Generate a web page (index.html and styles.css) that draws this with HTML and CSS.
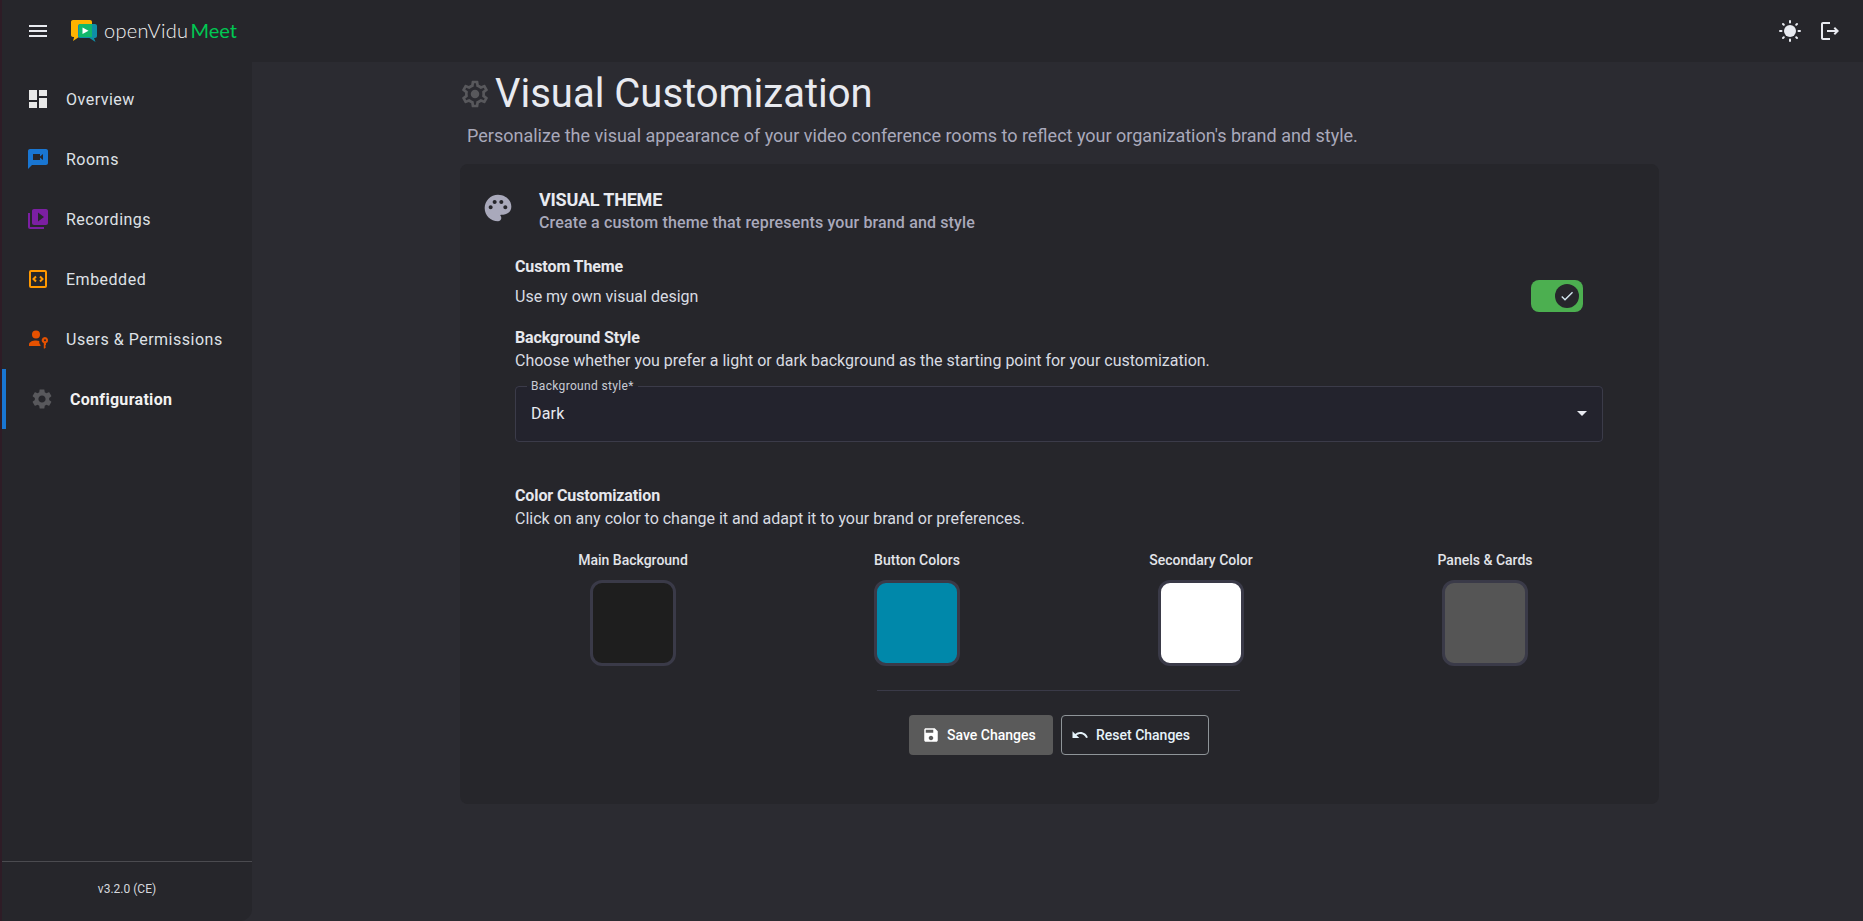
FILE: index.html
```html
<!DOCTYPE html>
<html lang="en">
<head>
    <meta charset="UTF-8">
    <title>Visual Customization</title>
    <link rel="stylesheet" href="styles.css">
</head>
<body>
    <div class="app">
        <header class="topbar">
            <button class="icon-btn menu-btn" type="button">
                <svg viewBox="0 0 24 24" width="24" height="24"><path fill="#e8eaf0" d="M3 18h18v-2H3v2zm0-5h18v-2H3v2zm0-7v2h18V6H3z"/></svg>
            </button>
            <div class="logo">
                <svg viewBox="0 0 26 23" width="26" height="23">
                    <path fill="#ffb300" d="M2 0h17c1.100 0 2 .9 2 2v13c0 1.100-.9 2-2 2H8l-6 4 1.200-4H2c-1.100 0-2-.9-2-2V2C0 .9.900 0 2 0z"/>
                    <path fill="#0f8fa8" d="M9 4h15c1.100 0 2 .9 2 2v10c0 1.100-.9 2-2 2h-1l1.500 4-6-4H9c-1.100 0-2-.9-2-2V6c0-1.100.9-2 2-2z"/>
                    <path fill="#12b76a" d="M8 4h13v13H9c-.6 0-1-.4-1-1z"/>
                    <path fill="#fff" d="M11.500 7.500l6 3.200-6 3.200z"/>
                </svg>
                <span class="logo-text">openVidu</span><span class="logo-meet">Meet</span>
            </div>
            <div class="topbar-actions">
                <button class="icon-btn" type="button">
                    <svg viewBox="0 0 24 24" width="24" height="24"><circle cx="12" cy="12" r="6" fill="#e8eaf0"/><path stroke="#e8eaf0" stroke-width="2" stroke-linecap="round" d="M12 2v1.500M12 20.500V22M2 12h1.500M20.500 12H22M5 5l.8.8M18.200 18.200l.8.8M5 19l.8-.8M18.200 5.800l.8-.8"/></svg>
                </button>
                <button class="icon-btn" type="button">
                    <svg viewBox="0 0 24 24" width="24" height="24"><path fill="#e8eaf0" d="M17 8l-1.410 1.410L17.170 11H9v2h8.170l-1.580 1.580L17 16l4-4zM5 5h7V3H5c-1.100 0-2 .9-2 2v14c0 1.100.9 2 2 2h7v-2H5V5z"/></svg>
                </button>
            </div>
        </header>

        <div class="layout">
            <aside class="sidebar">
                <nav class="nav">
                    <a class="nav-item">
                        <svg viewBox="0 0 24 24" width="24" height="24"><path fill="#e8e8e8" d="M3 13h8V3H3v10zm0 8h8v-6H3v6zm10 0h8V11h-8v10zm0-18v6h8V3h-8z"/></svg>
                        <span>Overview</span>
                    </a>
                    <a class="nav-item">
                        <svg viewBox="0 0 24 24" width="24" height="24"><path fill="#1976d2" d="M20 2H4c-1.100 0-2 .9-2 2v18l4-4h14c1.100 0 2-.9 2-2V4c0-1.100-.9-2-2-2zm-3 11l-3-2.400V13H7V7h7v2.400L17 7v6z"/></svg>
                        <span>Rooms</span>
                    </a>
                    <a class="nav-item">
                        <svg viewBox="0 0 24 24" width="24" height="24"><path fill="#7b1fa2" d="M4 6H2v14c0 1.100.9 2 2 2h14v-2H4V6zm16-4H8c-1.100 0-2 .9-2 2v12c0 1.100.9 2 2 2h12c1.100 0 2-.9 2-2V4c0-1.100-.9-2-2-2zm-8 12.500v-9l6 4.500-6 4.500z"/></svg>
                        <span>Recordings</span>
                    </a>
                    <a class="nav-item">
                        <svg viewBox="0 0 24 24" width="24" height="24"><rect x="4" y="4" width="16" height="16" rx="1" fill="none" stroke="#ff9800" stroke-width="2"/><path fill="none" stroke="#ff9800" stroke-width="2" d="M10 9.500L7.500 12l2.500 2.500M14 9.500l2.500 2.500-2.500 2.500"/></svg>
                        <span>Embedded</span>
                    </a>
                    <a class="nav-item">
                        <svg viewBox="0 0 24 24" width="24" height="24"><circle cx="10" cy="7.500" r="4" fill="#e65100"/><path fill="#e65100" d="M3 19v-1.500c0-2.500 3.500-4 7-4 1.200 0 2.300.2 3.300.5-.3 1.500.2 3 1.200 4v1z"/><path fill="#e65100" fill-rule="evenodd" d="M19 10a3.200 3.200 0 0 1 1 6.200V18l-1 1 1 1-1.200 1.500h-1L17.800 16.200A3.200 3.200 0 0 1 19 10zm0 2.200a1 1 0 1 0 0 2 1 1 0 0 0 0-2z"/></svg>
                        <span>Users &amp; Permissions</span>
                    </a>
                    <a class="nav-item active">
                        <svg viewBox="0 0 24 24" width="24" height="24"><path fill="#58585c" d="M19.140 12.940c.04-.3.06-.61.06-.94 0-.32-.02-.64-.07-.94l2.030-1.580c.18-.14.23-.41.12-.61l-1.920-3.320c-.12-.22-.37-.29-.59-.22l-2.390.96c-.5-.38-1.030-.7-1.620-.94l-.36-2.540c-.04-.24-.24-.41-.48-.41h-3.840c-.24 0-.43.17-.47.41l-.36 2.540c-.59.24-1.130.57-1.620.94l-2.390-.96c-.22-.08-.47 0-.59.22L2.740 8.870c-.12.21-.08.47.12.61l2.030 1.580c-.05.3-.09.63-.09.94s.02.64.07.94l-2.030 1.580c-.18.14-.23.41-.12.61l1.920 3.320c.12.22.37.29.59.22l2.390-.96c.5.38 1.030.7 1.620.94l.36 2.540c.05.24.24.41.48.41h3.840c.24 0 .44-.17.47-.41l.36-2.540c.59-.24 1.130-.56 1.620-.94l2.390.96c.22.08.47 0 .59-.22l1.920-3.320c.12-.22.07-.47-.12-.61l-2.010-1.580zM12 15.600c-1.980 0-3.600-1.620-3.600-3.600s1.620-3.600 3.600-3.600 3.600 1.620 3.600 3.600-1.620 3.600-3.600 3.600z"/></svg>
                        <span>Configuration</span>
                    </a>
                </nav>
                <div class="version">v3.2.0 (CE)</div>
            </aside>

            <main class="main">
                <div class="page-title">
                    <svg viewBox="0 0 24 24" width="32" height="32"><path fill="#58585c" d="M19.430 12.980c.04-.32.07-.64.07-.98 0-.34-.03-.66-.07-.98l2.110-1.650c.19-.15.24-.42.12-.64l-2-3.460c-.09-.16-.26-.25-.44-.25-.06 0-.12.01-.17.03l-2.490 1c-.52-.4-1.080-.73-1.690-.98l-.38-2.650C14.460 2.180 14.250 2 14 2h-4c-.25 0-.46.18-.49.42l-.38 2.650c-.61.25-1.170.59-1.690.98l-2.490-1c-.06-.02-.12-.03-.18-.03-.17 0-.34.09-.43.25l-2 3.460c-.13.22-.07.49.12.64l2.110 1.650c-.04.32-.07.65-.07.98 0 .33.03.66.07.98l-2.110 1.650c-.19.15-.24.42-.12.64l2 3.460c.09.16.26.25.44.25.06 0 .12-.01.17-.03l2.490-1c.52.4 1.080.73 1.690.98l.38 2.650c.03.24.24.42.49.42h4c.25 0 .46-.18.49-.42l.38-2.650c.61-.25 1.170-.59 1.690-.98l2.490 1c.06.02.12.03.18.03.17 0 .34-.09.43-.25l2-3.460c.12-.22.07-.49-.12-.64l-2.110-1.650zm-1.980-1.710c.04.31.05.52.05.73 0 .21-.02.43-.05.73l-.14 1.130.89.7 1.080.84-.7 1.210-1.270-.51-1.040-.42-.9.68c-.43.32-.84.56-1.250.73l-1.060.43-.16 1.130-.2 1.350h-1.400l-.19-1.350-.16-1.130-1.060-.43c-.43-.18-.83-.41-1.230-.71l-.91-.7-1.060.43-1.270.51-.7-1.210 1.080-.84.89-.7-.14-1.130c-.03-.31-.05-.54-.05-.74s.02-.43.05-.73l.14-1.130-.89-.7-1.080-.84.7-1.210 1.270.51 1.040.42.9-.68c.43-.32.84-.56 1.250-.73l1.060-.43.16-1.130.2-1.350h1.390l.19 1.350.16 1.130 1.060.43c.43.18.83.41 1.230.71l.91.7 1.060-.43 1.270-.51.7 1.210-1.070.85-.89.7.14 1.130z"/><circle cx="12" cy="12" r="3.200" fill="#58585c"/></svg>
                    <h1>Visual Customization</h1>
                </div>
                <p class="page-sub">Personalize the visual appearance of your video conference rooms to reflect your organization's brand and style.</p>

                <section class="card">
                    <div class="card-head">
                        <svg viewBox="0 0 24 24" width="32" height="32"><path fill="#a9a9bb" d="M12 2C6.490 2 2 6.490 2 12s4.490 10 10 10c1.380 0 2.500-1.120 2.500-2.500 0-.61-.23-1.200-.64-1.670-.08-.1-.13-.21-.13-.33 0-.28.22-.5.5-.5H16c3.310 0 6-2.690 6-6 0-4.960-4.490-9-10-9zm5.500 11c-.83 0-1.500-.67-1.500-1.500s.67-1.500 1.500-1.500 1.500.67 1.500 1.500-.67 1.500-1.500 1.500zm-3-4c-.83 0-1.500-.67-1.500-1.500S13.670 6 14.500 6s1.500.67 1.500 1.500S15.330 9 14.500 9zM5 11.500c0-.83.67-1.500 1.500-1.500s1.500.67 1.500 1.500S7.330 13 6.500 13 5 12.330 5 11.500zm6-4c0 .83-.67 1.500-1.500 1.500S8 8.330 8 7.500 8.670 6 9.500 6s1.500.67 1.500 1.500z"/></svg>
                        <div>
                            <h2>VISUAL THEME</h2>
                            <p>Create a custom theme that represents your brand and style</p>
                        </div>
                    </div>

                    <div class="card-body">
                        <div class="theme-row">
                            <div>
                                <h3>Custom Theme</h3>
                                <p class="row-text">Use my own visual design</p>
                            </div>
                            <div class="toggle">
                                <span class="toggle-knob">
                                    <svg viewBox="0 0 24 24" width="16" height="16"><path fill="#d5e8f2" d="M9 16.170L4.830 12l-1.420 1.410L9 19 21 7l-1.410-1.410z"/></svg>
                                </span>
                            </div>
                        </div>

                        <div class="bg-style">
                            <h3>Background Style</h3>
                            <p class="row-text">Choose whether you prefer a light or dark background as the starting point for your customization.</p>
                            <fieldset class="select-field">
                                <legend>Background style*</legend>
                                <span>Dark</span>
                                <span class="select-arrow"></span>
                            </fieldset>
                        </div>

                        <div class="colors-head">
                            <h3>Color Customization</h3>
                            <p class="row-text">Click on any color to change it and adapt it to your brand or preferences.</p>
                        </div>
                    </div>

                    <div class="swatches">
                        <div class="swatch-item">
                            <label>Main Background</label>
                            <div class="swatch swatch-main"></div>
                        </div>
                        <div class="swatch-item">
                            <label>Button Colors</label>
                            <div class="swatch swatch-button"></div>
                        </div>
                        <div class="swatch-item">
                            <label>Secondary Color</label>
                            <div class="swatch swatch-secondary"></div>
                        </div>
                        <div class="swatch-item">
                            <label>Panels &amp; Cards</label>
                            <div class="swatch swatch-panel"></div>
                        </div>
                    </div>

                    <hr class="divider">

                    <div class="actions">
                        <button class="btn btn-save" type="button">
                            <svg viewBox="0 0 24 24" width="18" height="18"><path fill="#fff" d="M17 3H5c-1.110 0-2 .9-2 2v14c0 1.100.89 2 2 2h14c1.100 0 2-.9 2-2V7l-4-4zm-5 16c-1.660 0-3-1.340-3-3s1.340-3 3-3 3 1.340 3 3-1.340 3-3 3zm3-10H5V5h10v4z"/></svg>
                            Save Changes
                        </button>
                        <button class="btn btn-reset" type="button">
                            <svg viewBox="0 0 24 24" width="18" height="18"><path fill="#e6f3fa" d="M12.500 8c-2.650 0-5.050.99-6.900 2.600L2 7v9h9l-3.620-3.620c1.390-1.160 3.160-1.880 5.120-1.880 3.540 0 6.550 2.310 7.600 5.500l2.370-.78C21.080 11.030 17.150 8 12.500 8z"/></svg>
                            Reset Changes
                        </button>
                    </div>
                </section>
            </main>
        </div>
    </div>
</body>
</html>
```

FILE: styles.css
```css
/* General Styles */
* {
  box-sizing: border-box;
}

body {
  margin: 0;
  padding: 0;
  background-color: #2b2b31;
  color: #e8eaf0;
  font-family: Roboto, "Liberation Sans", sans-serif;
}

h1, h2, h3, p {
  margin: 0;
}

.app {
  display: flex;
  flex-direction: column;
  height: 921px;
  overflow: hidden;
  border-left: 2px solid #2e1c26;
}

/* Top bar */
.topbar {
  display: flex;
  align-items: center;
  height: 62px;
  flex-shrink: 0;
  padding: 0 21px 0 24px;
  background-color: #26262b;
}

.icon-btn {
  display: flex;
  padding: 0;
  border: none;
  background: none;
}

.menu-btn {
  margin-right: 21px;
}

.logo {
  display: flex;
  align-items: center;
}

.logo svg {
  margin-right: 7px;
}

.logo-text {
  margin: -3px 2px 0 0;
  font-family: Lato, sans-serif;
  font-size: 20px;
  font-weight: 300;
  letter-spacing: 0.3px;
  color: #f2f2f2;
}

.logo-meet {
  margin-top: -3px;
  font-family: Lato, sans-serif;
  font-size: 20px;
  font-weight: 400;
  color: #00c853;
}

.topbar-actions {
  display: flex;
  gap: 16px;
  margin-left: auto;
}

/* Sidebar */
.layout {
  display: flex;
  flex: 1;
  min-height: 0;
}

.sidebar {
  display: flex;
  flex-direction: column;
  width: 250px;
  flex-shrink: 0;
  background-color: #26262b;
  border-bottom-right-radius: 12px;
}

.nav {
  display: flex;
  flex-direction: column;
  flex: 1;
  padding-top: 7px;
}

.nav-item {
  display: flex;
  align-items: center;
  height: 60px;
  padding-left: 24px;
  gap: 16px;
  font-size: 16px;
  letter-spacing: 0.5px;
  color: #dfe1e6;
}

.nav-item.active {
  padding-left: 24px;
  border-left: 4px solid #1976d2;
  font-weight: 700;
  letter-spacing: 0.3px;
  color: #f2f2f2;
}

.version {
  height: 60px;
  border-top: 1px solid #4b4b50;
  padding-top: 20px;
  text-align: center;
  font-size: 12px;
  color: #d5d8de;
}

/* Main area */
.main {
  flex: 1;
  padding: 9px 0 0 208px;
}

.page-title {
  display: flex;
  align-items: center;
  height: 46px;
  gap: 4px;
  margin-left: -1px;
}

.page-title h1 {
  font-size: 40px;
  font-weight: 400;
  line-height: 46px;
  color: #e8eaf0;
}

.page-sub {
  margin: 7px 0 0 7px;
  font-size: 18px;
  line-height: 24px;
  color: #a9a9bb;
}

/* Card */
.card {
  width: 1199px;
  height: 640px;
  margin-top: 16px;
  background-color: #26262b;
  border-radius: 8px;
}

.card-head {
  display: flex;
  align-items: center;
  gap: 25px;
  padding: 24px 0 0 22px;
}

.card-head svg {
  margin-top: -6px;
}

.card-head h2 {
  font-size: 18px;
  font-weight: 700;
  line-height: 24px;
  letter-spacing: -0.2px;
  color: #e8eaf0;
}

.card-head p {
  font-size: 16px;
  font-weight: 500;
  line-height: 22px;
  letter-spacing: 0.14px;
  color: #a9a9bb;
}

.card-body {
  padding: 0 56px 0 55px;
}

.card-body h3 {
  font-size: 16px;
  font-weight: 700;
  line-height: 22px;
  letter-spacing: -0.1px;
  color: #e6e8ed;
}

.row-text {
  font-size: 16px;
  line-height: 24px;
  color: #d9dce2;
}

.theme-row {
  display: flex;
  justify-content: space-between;
  align-items: flex-end;
  padding: 22px 20px 0 0;
}

.theme-row .row-text {
  margin-top: 7px;
}

/* Toggle */
.toggle {
  display: flex;
  align-items: center;
  justify-content: flex-end;
  width: 52px;
  height: 32px;
  margin-bottom: -3px;
  padding-right: 4px;
  background-color: #4caf50;
  border-radius: 8px;
}

.toggle-knob {
  display: flex;
  align-items: center;
  justify-content: center;
  width: 24px;
  height: 24px;
  background-color: #26262b;
  border-radius: 50%;
}

/* Select */
.bg-style {
  margin-top: 18px;
}

.select-field {
  display: flex;
  align-items: center;
  justify-content: space-between;
  height: 62px;
  margin: 7px 0 0;
  padding: 0 15px 6px;
  background-color: #23232d;
  border: 1px solid #3b3b49;
  border-radius: 4px;
  font-size: 16px;
  letter-spacing: 0.2px;
  color: #e8eaf0;
}

.select-field legend {
  margin-left: -4px;
  padding: 0 4px;
  font-size: 12px;
  line-height: 1;
  letter-spacing: 0.33px;
  color: #c9ccd4;
}

.select-arrow {
  width: 0;
  height: 0;
  border-left: 5px solid transparent;
  border-right: 5px solid transparent;
  border-top: 5px solid #e8eaf0;
}

.colors-head {
  margin-top: 43px;
}

/* Colour swatches */
.swatches {
  display: grid;
  grid-template-columns: repeat(4, 284px);
  margin: 19px 0 0 31px;
}

.swatch-item {
  display: flex;
  flex-direction: column;
  align-items: center;
}

.swatch-item label {
  font-size: 14px;
  font-weight: 500;
  line-height: 20px;
  color: #e2e4e9;
}

.swatch {
  width: 86px;
  height: 86px;
  margin-top: 10px;
  border: 3px solid #3a3a48;
  border-radius: 12px;
}

.swatch-main {
  background-color: #1e1e1e;
}

.swatch-button {
  background-color: #0088aa;
}

.swatch-secondary {
  background-color: #ffffff;
}

.swatch-panel {
  background-color: #555555;
}

.divider {
  width: 363px;
  height: 1px;
  margin: 24px 0 0 417px;
  border: none;
  background-color: #3a3a48;
}

/* Buttons */
.actions {
  display: flex;
  justify-content: center;
  gap: 8px;
  margin-top: 24px;
  padding-right: 1px;
}

.btn {
  display: flex;
  align-items: center;
  height: 40px;
  font-family: Roboto, sans-serif;
  font-size: 14px;
  font-weight: 500;
  border-radius: 4px;
}

.btn-save {
  gap: 7px;
  width: 144px;
  padding: 0 0 0 13px;
  background-color: #5a5a5a;
  border: none;
  color: #ffffff;
}

.btn-reset {
  gap: 7px;
  width: 148px;
  padding: 0 0 0 9px;
  background-color: transparent;
  border: 1px solid #8f9599;
  color: #e6f3fa;
}
```
